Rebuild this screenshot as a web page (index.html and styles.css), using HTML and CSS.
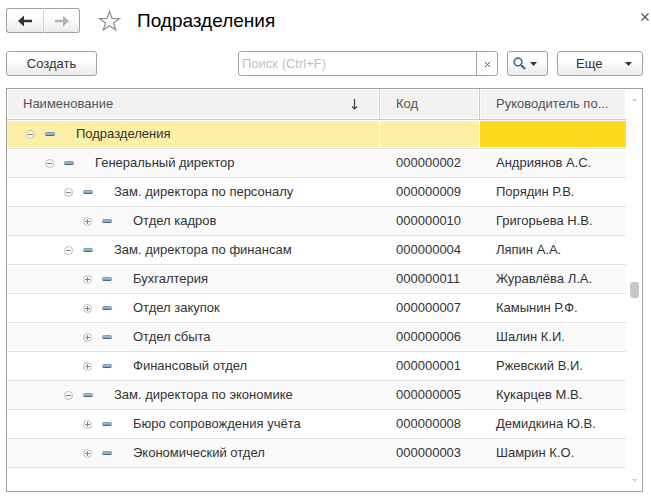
FILE: index.html
```html
<!DOCTYPE html>
<html lang="ru">
<head>
<meta charset="utf-8">
<title>Подразделения</title>
<link rel="stylesheet" href="styles.css">
</head>
<body>
<svg class="defs" aria-hidden="true">
  <defs>
    <linearGradient id="bar" x1="0" y1="0" x2="0" y2="1">
      <stop offset="0" stop-color="#b4cfe0"/>
      <stop offset="1" stop-color="#6f95b0"/>
    </linearGradient>
  </defs>
  <symbol id="minus" viewBox="0 0 9 9">
    <circle cx="4.5" cy="4.5" r="4" fill="#fff" fill-opacity=".6" stroke="#bbb"/>
    <path d="M2 4.5h5" stroke="#808080"/>
  </symbol>
  <symbol id="plus" viewBox="0 0 9 9">
    <circle cx="4.5" cy="4.5" r="4" fill="#fff" fill-opacity=".6" stroke="#bbb"/>
    <path d="M2 4.5h5M4.5 2v5" stroke="#808080"/>
  </symbol>
  <symbol id="item" viewBox="0 0 10 4">
    <rect x=".5" y=".5" width="9" height="3" rx="1" fill="url(#bar)" stroke="#7d9cb2"/>
    <path d="M1 3.5h8" stroke="#4b6b84"/>
  </symbol>
</svg>

<header class="titlebar">
  <div class="history">
    <button class="btn back" type="button" aria-label="Назад">
      <svg width="14" height="12" viewBox="0 0 14 12"><path d="M0 6 6 .5V4.700H14V7.300H6V11.500z" fill="#333"/></svg>
    </button>
    <button class="btn forward" type="button" aria-label="Вперед">
      <svg width="14" height="12" viewBox="0 0 14 12"><path d="M14 6 8 .5V4.700H0V7.300H8V11.500z" fill="#b3b3b3"/></svg>
    </button>
  </div>
  <button class="plain star" type="button" aria-label="В избранное">
    <svg width="23" height="22" viewBox="0 0 23 22"><path d="M11.500 1.500 14 8.500H21.500L15.500 13 17.800 20 11.500 15.800 5.200 20 7.500 13 1.500 8.500H9z" fill="#fff" stroke="#8c8c8c" stroke-width="1.200"/></svg>
  </button>
  <h1>Подразделения</h1>
  <button class="plain close" type="button" aria-label="Закрыть">
    <svg width="8" height="8" viewBox="0 0 8 8"><path d="M.5.5l7 7M7.500.5l-7 7" stroke="#555" stroke-width="1.300"/></svg>
  </button>
</header>

<div class="toolbar">
  <button class="btn create" type="button">Создать</button>
  <form class="search">
    <input type="text" placeholder="Поиск (Ctrl+F)" aria-label="Поиск">
    <button class="clear" type="reset" aria-label="Очистить">
      <svg width="5" height="5" viewBox="0 0 5 5"><path d="M0 0l5 5M5 0 0 5" stroke="#555"/></svg>
    </button>
  </form>
  <button class="btn find" type="button" aria-label="Найти">
    <svg width="13" height="13" viewBox="0 0 13 13" fill="none" stroke="#4a6f94"><circle cx="5" cy="5" r="3.900" stroke-width="1.700"/><path d="M8 8l4 4" stroke-width="2.400"/></svg>
    <svg width="7" height="4" viewBox="0 0 7 4"><path d="M0 0h7L3.500 4z" fill="#333"/></svg>
  </button>
  <button class="btn more" type="button">
    <span>Еще</span>
    <svg width="7" height="4" viewBox="0 0 7 4"><path d="M0 0h7L3.500 4z" fill="#333"/></svg>
  </button>
</div>

<main class="list">
  <table>
    <colgroup><col><col class="col-code"><col class="col-head"></colgroup>
    <thead>
      <tr>
        <th scope="col"><div class="sorted"><span>Наименование</span>
          <svg width="7" height="11" viewBox="0 0 7 11" fill="none" stroke="#444"><path d="M3.500 0v10M1 7.500l2.500 2.500L6 7.500" stroke-width="1.200"/></svg></div></th>
        <th scope="col">Код</th>
        <th scope="col">Руководитель по...</th>
      </tr>
    </thead>
    <tbody>
      <tr class="selected"><td><div class="node l0"><button class="plain" type="button" aria-label="Свернуть"><svg class="toggle"><use href="#minus"/></svg></button><svg class="item"><use href="#item"/></svg><span>Подразделения</span></div></td><td></td><td class="current"></td></tr>
      <tr><td><div class="node l1"><button class="plain" type="button" aria-label="Свернуть"><svg class="toggle"><use href="#minus"/></svg></button><svg class="item"><use href="#item"/></svg><span>Генеральный директор</span></div></td><td>000000002</td><td>Андриянов А.С.</td></tr>
      <tr><td><div class="node l2"><button class="plain" type="button" aria-label="Свернуть"><svg class="toggle"><use href="#minus"/></svg></button><svg class="item"><use href="#item"/></svg><span>Зам. директора по персоналу</span></div></td><td>000000009</td><td>Порядин Р.В.</td></tr>
      <tr><td><div class="node l3"><button class="plain" type="button" aria-label="Развернуть"><svg class="toggle"><use href="#plus"/></svg></button><svg class="item"><use href="#item"/></svg><span>Отдел кадров</span></div></td><td>000000010</td><td>Григорьева Н.В.</td></tr>
      <tr><td><div class="node l2"><button class="plain" type="button" aria-label="Свернуть"><svg class="toggle"><use href="#minus"/></svg></button><svg class="item"><use href="#item"/></svg><span>Зам. директора по финансам</span></div></td><td>000000004</td><td>Ляпин А.А.</td></tr>
      <tr><td><div class="node l3"><button class="plain" type="button" aria-label="Развернуть"><svg class="toggle"><use href="#plus"/></svg></button><svg class="item"><use href="#item"/></svg><span>Бухгалтерия</span></div></td><td>000000011</td><td>Журавлёва Л.А.</td></tr>
      <tr><td><div class="node l3"><button class="plain" type="button" aria-label="Развернуть"><svg class="toggle"><use href="#plus"/></svg></button><svg class="item"><use href="#item"/></svg><span>Отдел закупок</span></div></td><td>000000007</td><td>Камынин Р.Ф.</td></tr>
      <tr><td><div class="node l3"><button class="plain" type="button" aria-label="Развернуть"><svg class="toggle"><use href="#plus"/></svg></button><svg class="item"><use href="#item"/></svg><span>Отдел сбыта</span></div></td><td>000000006</td><td>Шалин К.И.</td></tr>
      <tr><td><div class="node l3"><button class="plain" type="button" aria-label="Развернуть"><svg class="toggle"><use href="#plus"/></svg></button><svg class="item"><use href="#item"/></svg><span>Финансовый отдел</span></div></td><td>000000001</td><td>Ржевский В.И.</td></tr>
      <tr><td><div class="node l2"><button class="plain" type="button" aria-label="Свернуть"><svg class="toggle"><use href="#minus"/></svg></button><svg class="item"><use href="#item"/></svg><span>Зам. директора по экономике</span></div></td><td>000000005</td><td>Кукарцев М.В.</td></tr>
      <tr><td><div class="node l3"><button class="plain" type="button" aria-label="Развернуть"><svg class="toggle"><use href="#plus"/></svg></button><svg class="item"><use href="#item"/></svg><span>Бюро сопровождения учёта</span></div></td><td>000000008</td><td>Демидкина Ю.В.</td></tr>
      <tr><td><div class="node l3"><button class="plain" type="button" aria-label="Развернуть"><svg class="toggle"><use href="#plus"/></svg></button><svg class="item"><use href="#item"/></svg><span>Экономический отдел</span></div></td><td>000000003</td><td>Шамрин К.О.</td></tr>
    </tbody>
  </table>
  <div class="scroll" aria-hidden="true">
    <svg width="5" height="3" viewBox="0 0 5 3"><path d="M0 3h5L2.500 0z" fill="#ccc"/></svg>
    <div class="track"><div class="thumb"></div></div>
    <svg width="5" height="3" viewBox="0 0 5 3"><path d="M0 0h5L2.500 3z" fill="#ccc"/></svg>
  </div>
</main>
</body>
</html>
```
FILE: styles.css
```css
* {
  box-sizing: border-box;
}

body {
  margin: 0;
  min-height: 100vh;
  padding: 8px 8px 5px 6px;
  display: flex;
  flex-direction: column;
  background: #fff;
  color: #333;
  font: 13px/16px "Liberation Sans", Arial, sans-serif;
}

svg {
  display: block;
  flex: none;
}

.defs {
  position: absolute;
  width: 0;
  height: 0;
}

button,
input {
  font: inherit;
  color: inherit;
}

.plain {
  border: 0;
  padding: 0;
  background: none;
}

.btn {
  height: 25px;
  padding: 0;
  border: 1px solid #a0a0a0;
  border-radius: 3px;
  background: linear-gradient(#fff 30%, #ebebeb);
  display: flex;
  align-items: center;
  justify-content: center;
}

/* Title bar */

.titlebar {
  display: flex;
  align-items: center;
  height: 25px;
}

.history {
  display: flex;
}

.back {
  width: 38px;
  border-right-color: #d4d4d4;
  border-radius: 3px 0 0 3px;
}

.forward {
  width: 36px;
  border-left: 0;
  border-radius: 0 3px 3px 0;
}

.star {
  margin-left: 18px;
}

h1 {
  margin: 0 0 0 16px;
  font-size: 19px;
  line-height: 24px;
  font-weight: 400;
  color: #000;
}

.close {
  margin: -8px -6px 0 auto;
}

/* Toolbar */

.toolbar {
  display: flex;
  gap: 9px;
  margin: 18px 0 12px;
}

.create {
  width: 91px;
}

.search {
  display: flex;
  width: 260px;
  height: 25px;
  margin-left: auto;
  border: 1px solid #a0a0a0;
  border-radius: 3px;
}

.search input {
  flex: 1;
  min-width: 0;
  padding: 0 3px;
  border: 0;
  outline: 0;
  background: none;
}

.search input::placeholder {
  color: #bfbfbf;
}

.clear {
  width: 21px;
  padding: 2px 0 0;
  border: 0;
  border-left: 1px solid #a0a0a0;
  background: none;
  display: flex;
  align-items: center;
  justify-content: center;
}

.find {
  width: 41px;
  padding-right: 5px;
  gap: 4px;
}

.more {
  width: 86px;
  padding: 0 10px 0 18px;
  justify-content: space-between;
}

/* Tree list */

.list {
  flex: 1;
  display: flex;
  align-items: flex-start;
  border: 1px solid #a0a0a0;
}

table {
  flex: 1;
  width: 0;
  table-layout: fixed;
  border-collapse: separate;
  border-spacing: 0;
}

.col-code {
  width: 100px;
}

.col-head {
  width: 146px;
}

th,
td {
  padding: 0 16px;
  text-align: left;
  white-space: nowrap;
  overflow: hidden;
  text-overflow: ellipsis;
}

th {
  height: 31px;
  border-right: 1px solid #ccc;
  border-bottom: 1px solid #ccc;
  background: #f2f2f2;
  color: #555;
  font-weight: 400;
  box-shadow: inset 0 0 0 1px #fff;
}

th:last-child {
  padding-right: 8px;
  border-right: 0;
}

.sorted {
  display: flex;
  align-items: center;
  justify-content: space-between;
  padding-right: 5px;
}

td {
  height: 29px;
  border-bottom: 1px solid #e2e2e2;
}

tbody tr:nth-child(even) {
  background: #fafafa;
}

.selected td {
  background: #fcf0a6;
  border-right: 1px solid #fff;
  box-shadow: inset 0 1px #fff, inset 0 -1px #fff;
}

.selected .current {
  background: #fcdb1f;
  border-right: 0;
}

.node {
  display: flex;
  align-items: center;
}

.node span {
  margin-left: 21px;
}

.l0 { padding-left: 3px; }
.l1 { padding-left: 22px; }
.l2 { padding-left: 41px; }
.l3 { padding-left: 60px; }

.toggle {
  width: 9px;
  height: 9px;
}

.item {
  width: 10px;
  height: 4px;
  margin-left: 10px;
}

.scroll {
  align-self: stretch;
  width: 16px;
  padding: 9px 0;
  display: flex;
  flex-direction: column;
  align-items: center;
}

.track {
  flex: 1;
  display: flex;
  flex-direction: column;
}

.track::before,
.track::after {
  content: "";
  flex: 1;
}

.thumb {
  width: 9px;
  height: 16px;
  border-radius: 3px;
  background: #c8c8c8;
}
```
